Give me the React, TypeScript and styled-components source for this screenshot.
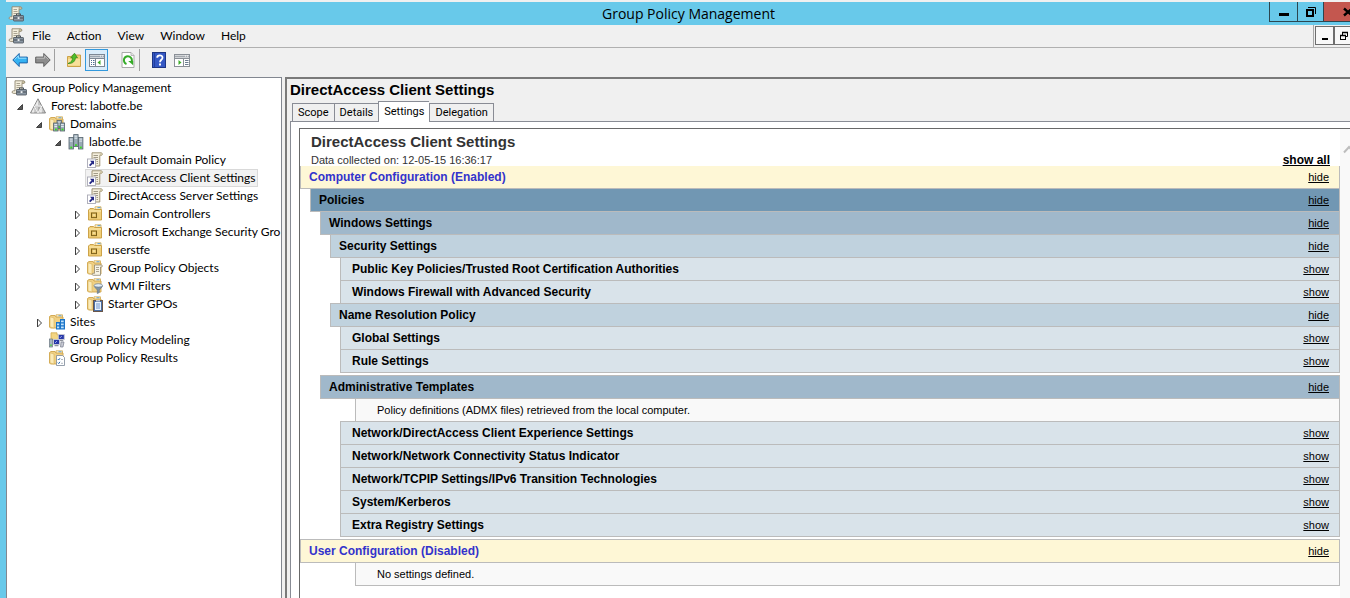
import React from "react";
import styled, { createGlobalStyle, css } from "styled-components";

const UI_FONT = `Lato, "Open Sans", sans-serif`;
const TITLE_FONT = `"Open Sans", "Noto Sans", sans-serif`;
const TAB_FONT = `Roboto, "Liberation Sans", sans-serif`;
const REPORT_FONT = `"Liberation Sans", Arial, sans-serif`;

const GlobalStyle = createGlobalStyle`
  *, *::before, *::after { box-sizing: border-box; }
  body { margin: 0; background: #f0f0f0; color: #000; font: 12px/18px ${UI_FONT}; }
  button { margin: 0; padding: 0; border: 0; background: none; color: inherit; font: inherit; }
  h1, h2, ul, p { margin: 0; padding: 0; }
  svg { display: block; flex: none; }
`;

const Window = styled.div`
  display: flex;
  flex-direction: column;
  height: 100vh;
  overflow: hidden;
  border-left: 6px solid #68c9ea;
`;

const TitleBar = styled.header`
  display: grid;
  grid-template-columns: auto 1fr auto;
  height: 25px;
  margin-right: -21px;
  flex: none;
  border-top: 2px solid #f0f0f0;
  background: #68c9ea;
`;

const TitleIcon = styled.span`
  grid-area: 1 / 1;
  padding: 4px 0 0 2px;
`;

const Title = styled.h1`
  grid-area: 1 / 1 / 2 / 4;
  text-align: center;
  font: 14px/24px ${TITLE_FONT};
`;

const Captions = styled.div`
  grid-area: 1 / 3;
  display: flex;
  height: 20px;
  border-bottom: 1px solid #2c4650;
`;

const CaptionButton = styled.button<{ $width: number; $close?: boolean }>`
  display: grid;
  place-items: center;
  width: ${(p) => p.$width}px;
  border-left: 1px solid #2c4650;
  background: ${(p) => (p.$close ? "#c4574f" : "transparent")};
`;

const MenuRow = styled.div`
  display: flex;
  height: 23px;
  flex: none;
  overflow: hidden;
`;

const MenuBar = styled.nav`
  display: flex;
  flex: 1;
  align-items: center;
  padding-left: 2px;
  border-right: 1px solid #a8a8a8;
  border-bottom: 1px solid #b0b0b0;
`;

const MenuButton = styled.button`
  padding: 0 8px;
  line-height: 20px;
`;

const ChildCaptions = styled.div`
  display: flex;
  width: 36px;
  padding: 1px 0 2px 1px;
  overflow: hidden;
  border-bottom: 1px solid #b0b0b0;
`;

const ChildButton = styled.button`
  display: grid;
  place-items: center;
  flex: none;
  width: 19px;
  border: 1px solid #6e6e6e;
  background: #f8f8f8;
`;

const Toolbar = styled.div`
  display: flex;
  flex: none;
  height: 29px;
  padding: 1px 2px;
`;

const ToolButton = styled.button<{ $active?: boolean }>`
  display: grid;
  place-items: center;
  width: 23px;
  height: 22px;
  border: 1px solid ${(p) => (p.$active ? "#3399dd" : "transparent")};
  background: ${(p) => (p.$active ? "#daecfa" : "transparent")};
`;

const ToolSeparator = styled.span`
  width: 1px;
  height: 22px;
  margin-right: 7px;
  background: #a0a0a0;
`;

const ToolGap = styled.span`
  width: 8px;
`;

const Body = styled.div`
  display: flex;
  flex: 1;
  min-height: 0;
  gap: 3px;
`;

const Sidebar = styled.nav`
  width: 276px;
  flex: none;
  overflow: hidden;
  padding-top: 1px;
  border: 1px solid #828790;
  border-bottom: 0;
  background: #fff;
`;

const Tree = styled.ul`
  list-style: none;
`;

const TreeRow = styled.li<{ $level: number }>`
  display: flex;
  height: 18px;
  padding-left: ${(p) => (p.$level === 0 ? 2 : p.$level * 19 - 12)}px;
  white-space: nowrap;
`;

const Expander = styled.button`
  display: grid;
  place-items: center;
  width: 14px;
  height: 18px;
  padding: 1px 2px 0 0;
  flex: none;
`;

const ExpanderSpace = styled.span`
  width: 14px;
  flex: none;
`;

const NodeButton = styled.button<{ $selected?: boolean }>`
  display: flex;
  align-items: center;
  gap: 5px;
  padding: 0 1px;
  border: 1px solid ${(p) => (p.$selected ? "#d9d9d9" : "transparent")};
  background: ${(p) => (p.$selected ? "#f2f2f2" : "transparent")};
  line-height: 16px;
`;

const Main = styled.main`
  display: flex;
  flex-direction: column;
  flex: 1;
  min-width: 0;
  border-top: 2px solid #7a7a7a;
  border-left: 2px solid #7a7a7a;
`;

const PaneTitle = styled.h2`
  padding-left: 3px;
  font: bold 15px/22px ${REPORT_FONT};
`;

const TabList = styled.div`
  display: flex;
  align-items: flex-end;
  height: 21px;
  padding-left: 5px;
  position: relative;
  z-index: 1;
`;

const Tab = styled.button<{ $active?: boolean }>`
  height: 19px;
  padding: 0 5px;
  border: 1px solid #898c95;
  border-right-width: 0;
  background: #f0f0f0;
  font: 11px/17px ${TAB_FONT};
  &:last-child { border-right-width: 1px; }
  ${(p) =>
    p.$active &&
    css`
      height: 21px;
      padding-bottom: 2px;
      border-bottom: 0;
      background: #fff;
    `}
`;

const TabPage = styled.section`
  display: flex;
  flex: 1;
  min-height: 0;
  margin: -1px 0 0 3px;
  padding: 6px 0 0 8px;
  border-top: 1px solid #898c95;
  border-left: 1px solid #898c95;
  background: #fff;
`;

const Viewer = styled.div`
  display: flex;
  flex: 1;
  min-width: 0;
  overflow: hidden;
  border-top: 1px solid #696969;
  border-left: 1px solid #696969;
`;

const Report = styled.article`
  flex: 1;
  min-width: 0;
  font: 11px/14px ${REPORT_FONT};
`;

const ScrollTrack = styled.div`
  flex: none;
  width: 17px;
  margin-right: -7px;
  padding: 16px 0 0 3px;
  background: #f9f9f9;
`;

const ReportHead = styled.div`
  display: flex;
  justify-content: space-between;
  align-items: flex-end;
  height: 37px;
  padding: 0 10px 0 11px;
  color: #333;
`;

const ReportTitle = styled.h2`
  font-size: 15px;
  line-height: 24px;
`;

const Collected = styled.p`
  line-height: 12px;
`;

const ShowAll = styled.a`
  color: #000;
  font-size: 12px;
  font-weight: bold;
  line-height: 12px;
`;

const tones = {
  root: "#fef7d6",
  policies: "#7197b3",
  group: "#a0b8cb",
  category: "#c0d2de",
  item: "#d9e3ea",
};

type Tone = keyof typeof tones;

const Section = styled.div<{ $tone: Tone; $level: number; $first?: boolean; $apart?: boolean }>`
  display: flex;
  align-items: center;
  justify-content: space-between;
  height: ${(p) => (p.$first ? 23 : 24)}px;
  margin: ${(p) => (p.$first ? 0 : p.$apart ? 2 : -1)}px 0 0 ${(p) => p.$level * 10}px;
  padding: 0 10px 0 ${(p) => (p.$tone === "item" ? 11 : 8)}px;
  border: 1px solid #bbb;
  ${(p) => p.$first && "border-top: 0;"}
  background: ${(p) => tones[p.$tone]};
  color: ${(p) => (p.$tone === "root" ? "#3333cc" : "#000")};
`;

const SectionName = styled.span`
  font-size: 12px;
  font-weight: bold;
`;

const ToggleLink = styled.a`
  color: #000;
`;

const Note = styled.p`
  height: 24px;
  margin: -1px 0 0 55px;
  padding-left: 21px;
  border: 1px solid #bbb;
  background: #f9f9f9;
  line-height: 23px;
`;

/* ---------- icons ---------- */

const Scroll = () => (
  <g>
    <path d="M4 .8h8.5c1.800 0 1.800 2.600 0 2.600H11v10H2.500c-1.900 0-1.900-2.600 0-2.600H4z" fill="#f4efdd" stroke="#8f866f" strokeWidth=".9" />
    <path d="M11 3.400V2C11 .8 13.800.8 13.700 2.300c0 .8-.6 1.100-1.200 1.100z" fill="#cfc5a4" stroke="#8f866f" strokeWidth=".6" />
    <path d="M5.500 3.500h3.500M5.500 5.500h4M5.500 7.500h4M5.500 9.500h3" stroke="#98917f" strokeWidth=".8" />
  </g>
);

const Folder = () => (
  <g>
    <path d="M7 .8h6.500v3H7z" fill="#fff8dc" stroke="#d0a850" strokeWidth=".8" />
    <path d="M9.500 1.800h3" stroke="#5a9fd8" />
    <path d="M.5 2.500 2 1.500h4l1 1.500h7v11H1.500l-1-1z" fill="#f0d084" stroke="#cfa44a" strokeWidth=".9" />
    <path d="M1 2.800 5 4v10l-4-1z" fill="#fbebb8" stroke="#d9b45c" strokeWidth=".6" />
  </g>
);

const Server = ({ x, y, h }: { x: number; y: number; h: number }) => (
  <g>
    <rect x={x} y={y} width="4.400" height={h} fill="#9aaab6" stroke="#56646e" strokeWidth=".8" />
    <path d={`M${x + 0.8} ${y + 1.6}h2.800M${x + 0.8} ${y + 3.6}h2.800`} stroke="#eef4f8" strokeWidth=".9" />
    <rect x={x + 1.4} y={y + h - 2.4} width="1.800" height="1.800" fill="#39e01c" />
  </g>
);

const MiniScreen = ({ x, y }: { x: number; y: number }) => (
  <g>
    <rect x={x} y={y} width="6" height="5" fill="#2838a8" stroke="#c9cbd6" strokeWidth=".9" />
    <path d={`M${x + 1.5} ${y + 3.5}l2-2`} stroke="#b8c4ff" strokeWidth=".8" />
    <path d={`M${x + 1} ${y + 6.2}h4`} stroke="#777d8c" />
  </g>
);

const glyphs: Record<string, React.ReactNode> = {
  console: (
    <>
      <Scroll />
      <rect x="5.500" y="9.500" width="10" height="5.500" rx=".6" fill="#8b97a3" stroke="#49525b" strokeWidth=".8" />
      <path d="M8.500 9.500V7.900h4v1.600" fill="none" stroke="#49525b" />
      <path d="M6 12h9" stroke="#3e464e" strokeWidth=".9" />
      <rect x="9.600" y="11.100" width="1.900" height="1.900" fill="#eef1f3" />
    </>
  ),
  forest: (
    <>
      <path d="M8 .8 15.500 15H.5z" fill="#c6c6c6" stroke="#7d7d7d" strokeWidth=".9" />
      <path d="M8 2v5.500H5zM4.200 9.200v5.200H1.500zM11.800 9.200v5.200H9.200z" fill="#ececec" />
      <path d="M4.300 8.100h7.400L8 14.900z" fill="#a9a9a9" stroke="#fff" strokeWidth=".9" />
      <path d="M8 8.500v5.500L5 8.500z" fill="#cdcdcd" />
    </>
  ),
  domains: (
    <>
      <Folder />
      <Server x={8} y={4.500} h={8} />
      <Server x={4.600} y={7} h={8} />
      <Server x={11.200} y={7} h={8} />
    </>
  ),
  domain: (
    <>
      <Server x={5.700} y={0.600} h={12} />
      <Server x={1} y={3.500} h={11.500} />
      <Server x={10.500} y={3.500} h={11.500} />
    </>
  ),
  gpoLink: (
    <>
      <path d="M5 .8h9c1.800 0 1.800 2.600 0 2.600h-1.200V14H3.500C5 13.700 5 12.800 5 11.500z" fill="#f4efdd" stroke="#94896a" strokeWidth=".9" />
      <path d="M12.800 3.400V2.200c0-1.200 2.500-1.200 2.400.2 0 .8-.7 1-1.200 1z" fill="#cfc5a4" />
      <path d="M6.500 3.500H11M6.500 5.500H11M9 7.500h2M9.500 9.500H11M9.500 11.500H11" stroke="#98917f" strokeWidth=".9" />
      <rect x=".5" y="7" width="8" height="8.500" fill="#fff" stroke="#a9a9b5" strokeWidth=".9" />
      <path d="M3 8.800h4v4L5.900 11.700 3.300 14.200 2 12.900l2.500-2.500z" fill="#262a86" />
    </>
  ),
  ou: (
    <>
      <path d="M8 .8h6v2.500H8z" fill="#fff8dc" stroke="#d0a850" strokeWidth=".8" />
      <path d="M10.500 1.600h3" stroke="#5a9fd8" />
      <path d="M1.500 4 3 2.500h3.500l1 1h7v10.500h-13z" fill="#f0cf78" stroke="#c79b3c" strokeWidth=".9" />
      <path d="M2 5h12" stroke="#fbeab4" />
      <rect x="4.500" y="7" width="5" height="4.600" fill="#e8c568" stroke="#7d6018" />
      <path d="M6 9h2.200" stroke="#fff3c4" />
    </>
  ),
  gpoFolder: (
    <>
      <Folder />
      <path d="M7.500 5h6.800c1.500 0 1.500 2 0 2h-.8v8.300H6.200c-1.400 0-1.400-2 0-2h1.300z" fill="#f7f3e4" stroke="#8f866f" strokeWidth=".8" />
      <path d="M9 7.500h3M9 9.500h3M9 11.500h3" stroke="#98917f" strokeWidth=".8" />
    </>
  ),
  wmi: (
    <>
      <Folder />
      <path d="M7 7.800c.4 2.200 2.900 2.800 3.300 4.200v3.600l2-1V12c.4-1.400 2.900-2 3.300-4.200z" fill="#7f93a6" stroke="#5d6f80" strokeWidth=".6" />
      <ellipse cx="11.300" cy="7.400" rx="4.200" ry="1.700" fill="#e3edf5" stroke="#6f8091" strokeWidth=".7" />
    </>
  ),
  starter: (
    <>
      <Folder />
      <rect x="6.500" y="4.500" width="9" height="11" fill="#4a6fa5" stroke="#6a5648" />
      <rect x="8" y="6" width="6" height="8" fill="#eaf3fd" />
      <path d="M9 8h4M9 10h4M9 12h4" stroke="#4f7cc0" strokeWidth=".8" />
      <path d="M9 4h4v1.500H9z" fill="#c2c7cf" />
    </>
  ),
  sites: (
    <>
      <Folder />
      <path d="M7 8h4V5h5v10.500H7z" fill="#1b74c8" />
      <path d="M8 9.500h2.200v1.800H8zM8 12.500h2.200v1.800H8zM12 6.500h2.700v1.800H12zM12 9.500h2.700v1.800H12zM12 12.500h2.700v1.800H12z" fill="#bfe2fb" />
    </>
  ),
  modeling: (
    <>
      <path d="M2 .8h6v2h5v5H2z" fill="#f3d583" stroke="#d0a850" strokeWidth=".8" />
      <MiniScreen x={9.300} y={2.500} />
      <MiniScreen x={4.500} y={7.500} />
      <rect x=".5" y="7" width="3" height="8" fill="#a9b6c0" stroke="#69767f" strokeWidth=".7" />
      <path d="M12 10h3l-1 5h-2.500z" fill="#c8cad4" stroke="#777d8c" strokeWidth=".7" />
      <rect x="1.300" y="12.500" width="1.400" height="1.400" fill="#39d422" />
    </>
  ),
  results: (
    <>
      <Folder />
      <path d="M7.500 5.500h6l2 2v8h-8z" fill="#fff" stroke="#7b8898" strokeWidth=".8" />
      <path d="M8.800 9l.9 1 1.300-1.800M8.800 12.600l.9 1 1.300-1.800" fill="none" stroke="#2b6fb8" />
      <path d="M12 9.500h2M12 13.300h2" stroke="#9aa4b0" strokeWidth=".8" />
    </>
  ),
  back: (
    <>
      <path d="M.8 8 7.200 1.500v3.600h8.100v5.800H7.200v3.600z" fill="#35b2f2" stroke="#1b62a8" strokeLinejoin="round" />
      <path d="M2.500 7.600 6.400 3.800v2.400h8" fill="none" stroke="#9be0ff" />
    </>
  ),
  forward: (
    <>
      <path d="M15.200 8 8.800 1.500v3.600H.7v5.800h8.100v3.600z" fill="#8d8d8d" stroke="#5f5f5f" strokeLinejoin="round" />
      <path d="M1.500 6.200h8.100V3.800l3.900 3.800" fill="none" stroke="#bcbcbc" />
    </>
  ),
  up: (
    <>
      <path d="M1.500 4.500h4l1-1.500h8v11.500h-13z" fill="#f0cf78" stroke="#c79b3c" strokeWidth=".9" />
      <path d="M2 7h12v6.500H2z" fill="#f8e09a" />
      <path d="M2 11.500C5.500 10.500 6.500 8 6.600 5.600L4.700 6 8.500 1.200l3 4.600-2-.2C9.300 9 7 11.800 2 11.500z" fill="#4fc02b" stroke="#2c8417" strokeWidth=".7" />
    </>
  ),
  treePane: (
    <>
      <rect x=".5" y="2.500" width="15" height="12" fill="#fff" stroke="#7c8794" />
      <path d="M1 4.500h14" stroke="#9aa5b1" strokeWidth="2" />
      <path d="M11 4h1M13 4h1" stroke="#fff" />
      <path d="M1 6.500h14M6.500 6.500v8" stroke="#7c8794" />
      <path d="M2 8.500h1M4 8.500h1.500M2 10.500h1M4 10.500h1.500M2 12.500h1M4 12.500h1.500" stroke="#4e6e92" />
      <path d="M11.500 8v5L8.500 10.500z" fill="#3fae2a" />
    </>
  ),
  refresh: (
    <>
      <path d="M2 .5h9l3 3v12H2z" fill="#fff" stroke="#a0a0a0" strokeWidth=".9" />
      <path d="M11 .5v3h3" fill="#e5e5e5" stroke="#a0a0a0" strokeWidth=".7" />
      <path d="M6.500 12A4 4 0 1 1 11.500 10" fill="none" stroke="#35ab27" strokeWidth="2" />
      <path d="M8.200 9h5v4.200z" fill="#35ab27" />
    </>
  ),
  help: (
    <>
      <rect x="1.500" y=".5" width="13" height="15" fill="#3558c4" stroke="#1d3585" />
      <path d="M3.500 1v14" stroke="#223f9f" />
      <path d="M6.200 5.700c0-3.200 5.400-3.200 5.300 0 0 2-2.500 2.200-2.500 4.500" fill="none" stroke="#fff" strokeWidth="1.800" />
      <rect x="8" y="11.500" width="2" height="2" fill="#fff" />
    </>
  ),
  actionPane: (
    <>
      <rect x=".5" y="2.500" width="15" height="12" fill="#fff" stroke="#8a8f96" />
      <path d="M1 4.500h14" stroke="#a4a9af" strokeWidth="2" />
      <path d="M11 4h1M13 4h1" stroke="#fff" />
      <path d="M1 6.500h14M9.500 6.500v8" stroke="#8a8f96" />
      <path d="M11 8.500h3.500M11 10.500h3.500M11 12.500h3.500" stroke="#6c7d90" />
      <path d="M4.500 8v5l3-2.500z" fill="#3fae2a" />
    </>
  ),
};

const Icon = ({ name }: { name: string }) => (
  <svg width="16" height="16" viewBox="0 0 16 16" aria-hidden="true">
    {glyphs[name]}
  </svg>
);

const OpenMark = () => (
  <svg width="8" height="8" viewBox="0 0 8 8">
    <path d="M6.500 1.500v5h-5z" fill="#595959" stroke="#262626" strokeWidth=".8" />
  </svg>
);

const ClosedMark = () => (
  <svg width="8" height="10" viewBox="0 0 8 10">
    <path d="M2.500 1v8L6.500 5z" fill="#fff" stroke="#404040" />
  </svg>
);

/* ---------- data ---------- */

interface TreeNode {
  label: string;
  icon: string;
  level: number;
  state?: "open" | "closed";
  selected?: boolean;
}

const nodes: TreeNode[] = [
  { label: "Group Policy Management", icon: "console", level: 0 },
  { label: "Forest: labotfe.be", icon: "forest", level: 1, state: "open" },
  { label: "Domains", icon: "domains", level: 2, state: "open" },
  { label: "labotfe.be", icon: "domain", level: 3, state: "open" },
  { label: "Default Domain Policy", icon: "gpoLink", level: 4 },
  { label: "DirectAccess Client Settings", icon: "gpoLink", level: 4, selected: true },
  { label: "DirectAccess Server Settings", icon: "gpoLink", level: 4 },
  { label: "Domain Controllers", icon: "ou", level: 4, state: "closed" },
  { label: "Microsoft Exchange Security Gro", icon: "ou", level: 4, state: "closed" },
  { label: "userstfe", icon: "ou", level: 4, state: "closed" },
  { label: "Group Policy Objects", icon: "gpoFolder", level: 4, state: "closed" },
  { label: "WMI Filters", icon: "wmi", level: 4, state: "closed" },
  { label: "Starter GPOs", icon: "starter", level: 4, state: "closed" },
  { label: "Sites", icon: "sites", level: 2, state: "closed" },
  { label: "Group Policy Modeling", icon: "modeling", level: 2 },
  { label: "Group Policy Results", icon: "results", level: 2 },
];

interface ReportRow {
  text: string;
  tone?: Tone;
  level?: number;
  action?: "show" | "hide";
  first?: boolean;
  apart?: boolean;
}

const rows: ReportRow[] = [
  { text: "Computer Configuration (Enabled)", tone: "root", level: 0, action: "hide", first: true },
  { text: "Policies", tone: "policies", level: 1, action: "hide" },
  { text: "Windows Settings", tone: "group", level: 2, action: "hide" },
  { text: "Security Settings", tone: "category", level: 3, action: "hide" },
  { text: "Public Key Policies/Trusted Root Certification Authorities", tone: "item", level: 4, action: "show" },
  { text: "Windows Firewall with Advanced Security", tone: "item", level: 4, action: "show" },
  { text: "Name Resolution Policy", tone: "category", level: 3, action: "hide" },
  { text: "Global Settings", tone: "item", level: 4, action: "show" },
  { text: "Rule Settings", tone: "item", level: 4, action: "show" },
  { text: "Administrative Templates", tone: "group", level: 2, action: "hide", apart: true },
  { text: "Policy definitions (ADMX files) retrieved from the local computer." },
  { text: "Network/DirectAccess Client Experience Settings", tone: "item", level: 4, action: "show" },
  { text: "Network/Network Connectivity Status Indicator", tone: "item", level: 4, action: "show" },
  { text: "Network/TCPIP Settings/IPv6 Transition Technologies", tone: "item", level: 4, action: "show" },
  { text: "System/Kerberos", tone: "item", level: 4, action: "show" },
  { text: "Extra Registry Settings", tone: "item", level: 4, action: "show" },
  { text: "User Configuration (Disabled)", tone: "root", level: 0, action: "hide", apart: true },
  { text: "No settings defined." },
];

const menus = ["File", "Action", "View", "Window", "Help"];
const tabs = ["Scope", "Details", "Settings", "Delegation"];

export default function App() {
  return (
    <Window>
      <GlobalStyle />
      <TitleBar>
        <TitleIcon>
          <Icon name="console" />
        </TitleIcon>
        <Title>Group Policy Management</Title>
        <Captions>
          <CaptionButton $width={28} aria-label="Minimize">
            <svg width="12" height="12" viewBox="0 0 12 12">
              <path d="M1 7h10v3H1z" />
            </svg>
          </CaptionButton>
          <CaptionButton $width={26} aria-label="Restore">
            <svg width="12" height="12" viewBox="0 0 12 12">
              <path d="M3 1.500h7.500V8" fill="none" stroke="#000" />
              <rect x="2" y="4" width="6" height="6" fill="none" stroke="#000" strokeWidth="2" />
            </svg>
          </CaptionButton>
          <CaptionButton $width={48} $close aria-label="Close">
            <svg width="10" height="10" viewBox="0 0 10 10">
              <path d="M1 1.500 9 8.500M9 1.500 1 8.500" stroke="#000" strokeWidth="2.400" />
            </svg>
          </CaptionButton>
        </Captions>
      </TitleBar>

      <MenuRow>
        <MenuBar aria-label="Menu">
          <Icon name="console" />
          {menus.map((m) => (
            <MenuButton key={m}>{m}</MenuButton>
          ))}
        </MenuBar>
        <ChildCaptions>
          <ChildButton aria-label="Minimize console">
            <svg width="8" height="8" viewBox="0 0 8 8">
              <path d="M1 6h6v2H1z" />
            </svg>
          </ChildButton>
          <ChildButton aria-label="Restore console">
            <svg width="10" height="10" viewBox="0 0 10 10">
              <path d="M3.500 4V1.500h5v4H7" fill="none" stroke="#000" />
              <path d="M3 1.500h6M1 4.500h6" stroke="#000" strokeWidth="1.500" />
              <rect x="1.500" y="4.500" width="5" height="4" fill="none" stroke="#000" />
            </svg>
          </ChildButton>
        </ChildCaptions>
      </MenuRow>

      <Toolbar role="toolbar">
        <ToolButton aria-label="Back"><Icon name="back" /></ToolButton>
        <ToolButton aria-label="Forward"><Icon name="forward" /></ToolButton>
        <ToolSeparator />
        <ToolButton aria-label="Up one level"><Icon name="up" /></ToolButton>
        <ToolButton $active aria-label="Show or hide console tree"><Icon name="treePane" /></ToolButton>
        <ToolGap />
        <ToolButton aria-label="Refresh"><Icon name="refresh" /></ToolButton>
        <ToolSeparator />
        <ToolButton aria-label="Help"><Icon name="help" /></ToolButton>
        <ToolButton aria-label="Show or hide action pane"><Icon name="actionPane" /></ToolButton>
      </Toolbar>

      <Body>
        <Sidebar aria-label="Console tree">
          <Tree>
            {nodes.map((n) => (
              <TreeRow key={n.label} $level={n.level}>
                {n.state && (
                  <Expander aria-label={n.state === "open" ? "Collapse" : "Expand"}>
                    {n.state === "open" ? <OpenMark /> : <ClosedMark />}
                  </Expander>
                )}
                {!n.state && n.level > 0 && <ExpanderSpace />}
                <NodeButton $selected={n.selected}>
                  <Icon name={n.icon} />
                  {n.label}
                </NodeButton>
              </TreeRow>
            ))}
          </Tree>
        </Sidebar>

        <Main>
          <PaneTitle>DirectAccess Client Settings</PaneTitle>
          <TabList role="tablist">
            {tabs.map((t) => (
              <Tab key={t} role="tab" $active={t === "Settings"} aria-selected={t === "Settings"}>
                {t}
              </Tab>
            ))}
          </TabList>
          <TabPage>
            <Viewer>
              <Report>
                <ReportHead>
                  <div>
                    <ReportTitle>DirectAccess Client Settings</ReportTitle>
                    <Collected>Data collected on: 12-05-15 16:36:17</Collected>
                  </div>
                  <ShowAll href="#all">show all</ShowAll>
                </ReportHead>
                {rows.map((r) =>
                  r.tone ? (
                    <Section key={r.text} $tone={r.tone} $level={r.level ?? 0} $first={r.first} $apart={r.apart}>
                      <SectionName>{r.text}</SectionName>
                      <ToggleLink href="#section">{r.action}</ToggleLink>
                    </Section>
                  ) : (
                    <Note key={r.text}>{r.text}</Note>
                  ),
                )}
              </Report>
              <ScrollTrack>
                <svg width="12" height="10" viewBox="0 0 12 10">
                  <path d="M1 7.500 6 2l5 5.500" fill="none" stroke="#bdbdbd" strokeWidth="2" />
                </svg>
              </ScrollTrack>
            </Viewer>
          </TabPage>
        </Main>
      </Body>
    </Window>
  );
}
